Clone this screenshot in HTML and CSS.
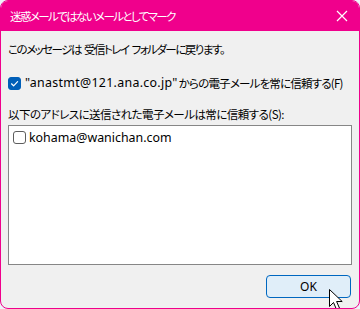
FILE: index.html
```html
<!DOCTYPE html>
<html lang="ja">
<head>
<meta charset="utf-8">
<link rel="stylesheet" href="styles.css">
</head>
<body>
<div class="window">
  <div class="titlebar">
    <span class="title">迷惑メールではないメールとしてマーク</span>
    <svg class="close" width="12" height="12" viewBox="0 0 12 12"><path d="M1 1L11 11M11 1L1 11" stroke="#fff" stroke-width="1.2" fill="none"/></svg>
  </div>
  <div class="content">
    <p class="line first">このメッセージは<span class="gap"></span>受信トレイ<span class="gap"></span>フォルダーに戻ります。</p>
    <label class="line check-row">
      <span class="cb checked"><svg width="13" height="13" viewBox="0 0 13 13"><path d="M3.5 6.8L5.6 8.8L9.6 4.6" stroke="#fff" stroke-width="1.2" fill="none" stroke-linecap="round" stroke-linejoin="round"/></svg></span>
      <span class="latin addr">"anastmt@121.ana.co.jp"</span><span class="jp2">からの電子メールを常に信頼する(F)</span>
    </label>
    <p class="line third">以下のアドレスに送信された電子メールは常に信頼する(S):</p>
    <div class="listbox">
      <div class="item"><span class="cb"></span><span class="latin">kohama@wanichan.com</span></div>
    </div>
    <div class="buttons">
      <button class="ok">OK</button>
    </div>
  </div>
  <svg class="cursor" width="20" height="24" viewBox="0 0 20 24"><path d="M1.5 1.5L1.5 18.5L5.5 14.5L8.5 21.5L11.5 20.2L8.6 13.5L14.2 13.5Z" fill="#fff" stroke="#000" stroke-width="1" stroke-linejoin="round"/></svg>
</div>
</body>
</html>
```
FILE: styles.css
```css
html, body {
  margin: 0;
  padding: 0;
  background: #eef3f9;
}
.window {
  position: relative;
  width: 358px;
  height: 307px;
  border: 1px solid #f0008c;
  border-radius: 8px;
  overflow: hidden;
  background: #f0f0f0;
  font-family: "Noto Sans", "Noto Sans CJK JP", sans-serif;
  font-size: 12px;
  color: #000;
}
.titlebar {
  height: 30px;
  background: #f0008c;
  display: flex;
  align-items: center;
  justify-content: space-between;
  padding: 0 11px 0 9px;
}
.title {
  color: #fff;
  font-family: "Noto Sans CJK JP", sans-serif;
  font-feature-settings: "palt";
  font-size: 11.5px;
  letter-spacing: -1.6px;
  padding-bottom: 1px;
}
.close { display: block; }
.content {
  padding: 0 7px;
}
.line {
  margin: 0;
  font-family: "Noto Sans CJK JP", sans-serif;
  font-feature-settings: "palt";
  font-size: 11.5px;
  letter-spacing: -0.55px;
  height: 16px;
  line-height: 16px;
  display: flex;
  align-items: center;
  white-space: nowrap;
}
.latin { font-family: "Noto Sans", sans-serif; font-size: 12.4px; font-feature-settings: normal; letter-spacing: 0; }
.addr { letter-spacing: 0.3px; margin-right: 1px; }
.jp2 { letter-spacing: -0.8px; }
.first { margin-top: 10px; letter-spacing: -1.5px; }
.gap { display: inline-block; width: 3px; }
.check-row { margin-top: 18px; }
.third { margin-top: 15px; }
.cb {
  box-sizing: border-box;
  width: 13px;
  height: 13px;
  border-radius: 3px;
  border: 1px solid #5e5e5e;
  background: #fff;
  display: inline-block;
  flex: none;
  margin-right: 4px;
}
.cb.checked {
  background: #005fb8;
  border-color: #005fb8;
  position: relative;
}
.cb.checked svg { position: absolute; left: -1px; top: -1px; }
.listbox {
  box-sizing: border-box;
  margin-top: 3px;
  height: 140px;
  border: 1px solid #868686;
  background: #fff;
  padding: 3px 4px;
}
.item {
  display: flex;
  align-items: center;
  height: 16px;
}
.item .cb { margin-right: 3px; }
.buttons {
  display: flex;
  justify-content: flex-end;
  margin-top: 10px;
  padding-right: 1px;
}
.ok {
  width: 85px;
  height: 23px;
  border: 1px solid #0067c0;
  border-radius: 4px;
  background: #e0eef9;
  font-family: "Noto Sans", sans-serif;
  font-size: 12px;
  color: #000;
  padding: 0;
}
.cursor {
  position: absolute;
  left: 327px;
  top: 287px;
}
```
